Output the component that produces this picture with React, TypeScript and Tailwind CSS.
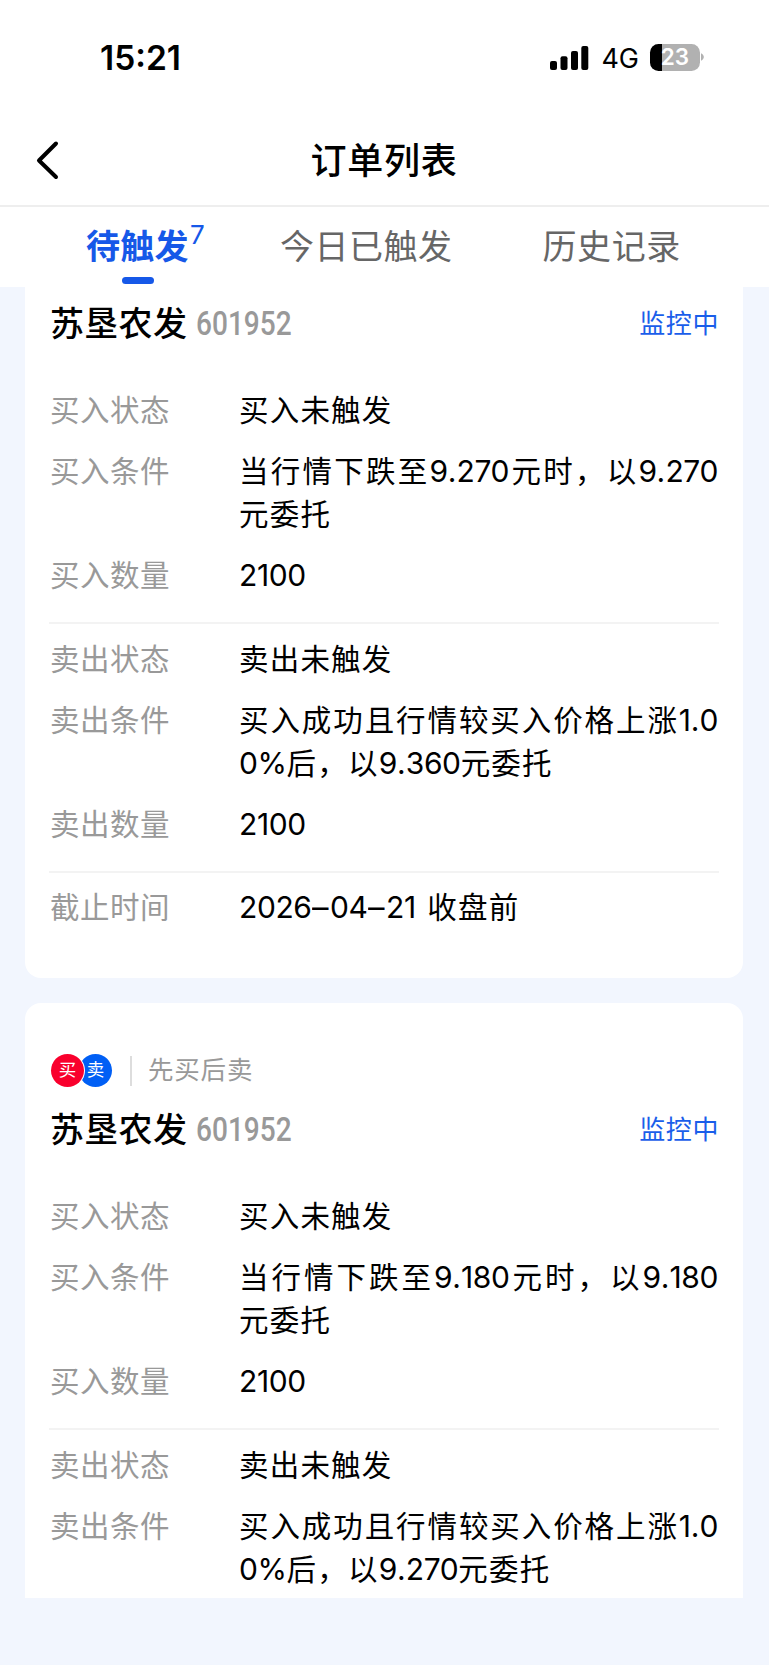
import React from "react";

type Row = { label: string; lines: string[] };

function Field({ label, lines }: Row) {
  return (
    <div className="flex">
      <div className="-mt-[2px] w-[190px] shrink-0 pl-px text-[29.5px] tracking-[0.5px] leading-[43px] text-[#999999]">{label}</div>
      <div className="mr-px flex-1 font-[Inter,'Noto_Sans_CJK_SC',sans-serif] text-[29.5px] leading-[43px] text-black">
        {lines.map((line, i) => (
          <p
            key={line}
            className={
              i < lines.length - 1
                ? "h-[43px] whitespace-nowrap [text-align-last:justify]"
                : "h-[43px] whitespace-nowrap tracking-[1.2px] [word-spacing:2px]"
            }
          >
            {line.split(/([\d%]+|[.–])/).map((part, k) => {
              if (/^[\d%]+$/.test(part)) {
                return (
                  <span key={k} className="text-[30px] tracking-[-0.4px]">
                    {part}
                  </span>
                );
              }
              if (part === ".") {
                return (
                  <span key={k} className="text-[30px] tracking-[0.2px]">
                    {part}
                  </span>
                );
              }
              if (part === "–") {
                return (
                  <span key={k} className="inline-block w-[18.5px] origin-left scale-x-110 text-[30px] tracking-normal">
                    {part}
                  </span>
                );
              }
              return part;
            })}
          </p>
        ))}
      </div>
    </div>
  );
}

function Fields({ rows }: { rows: Row[] }) {
  return (
    <div className="flex flex-col gap-[18px]">
      {rows.map((row) => (
        <Field key={row.label} {...row} />
      ))}
    </div>
  );
}

function StockTitle() {
  return (
    <div className="flex h-[48px] items-center">
      <h2 className="-mt-[4px] ml-px text-[34px] font-medium tracking-[0.3px] text-black">苏垦农发</h2>
      <span className="mt-[2px] ml-[9px] origin-left scale-x-[0.85] font-[Roboto,sans-serif] text-[33px] font-medium text-[#999999]">
        601952
      </span>
      <span className="-mt-[3px] ml-auto text-[26px] tracking-[0.6px] text-[#1a5eea]">监控中</span>
    </div>
  );
}

function Divider() {
  return <div className="mt-[25px] mb-[13.5px] h-[2px] bg-[#f3f3f3]" />;
}

function buyRows(price: string): Row[] {
  return [
    { label: "买入状态", lines: ["买入未触发"] },
    { label: "买入条件", lines: [`当行情下跌至${price}元时，以${price}`, "元委托"] },
    { label: "买入数量", lines: ["2100"] },
  ];
}

function sellRows(price: string): Row[] {
  return [
    { label: "卖出状态", lines: ["卖出未触发"] },
    { label: "卖出条件", lines: ["买入成功且行情较买入价格上涨1.0", `0%后，以${price}元委托`] },
  ];
}

function StatusBar() {
  return (
    <div className="flex h-[115px] items-start pt-[37px] pr-[65px] pl-[67px] font-[Inter,sans-serif]">
      <span className="ml-[33px] text-[33.5px] leading-[42px] font-semibold">15:21</span>
      <div className="ml-auto flex h-[42px] items-center">
        <svg width="39" height="26" viewBox="0 0 39 26">
          <rect x="0" y="16" width="7" height="9" rx="2" />
          <rect x="10.5" y="11.3" width="7" height="13.7" rx="2" />
          <rect x="21" y="6" width="7" height="19" rx="2" />
          <rect x="31.3" y="1" width="7" height="24" rx="2" />
        </svg>
        <span className="mt-[2px] ml-[12px] text-[27px]">4G</span>
        <div className="-mt-[2px] ml-[11px] flex h-[27px] w-[50px] items-center justify-center overflow-hidden rounded-[8.5px] bg-[linear-gradient(90deg,#000_0_12px,#b1b1b1_12px)] text-[22.5px] font-semibold text-white">
          23
        </div>
        <svg className="-mt-[2px] ml-px" width="3" height="10" viewBox="0 0 4 10">
          <path d="M0 0C5 2.500 5 7.500 0 10Z" fill="#b1b1b1" />
        </svg>
      </div>
    </div>
  );
}

export default function App() {
  return (
    <div className="flex h-[1665px] w-[769px] flex-col overflow-hidden bg-white font-['Noto_Sans_CJK_SC',sans-serif] text-black" lang="zh-CN">
      <StatusBar />
      <header className="grid h-[92px] grid-cols-[1fr_auto_1fr] items-center border-b-2 border-[#eeeeee]">
        <svg className="ml-[35px]" width="26" height="40" viewBox="0 0 26 40" fill="none" stroke="#000" strokeWidth="4" strokeLinecap="round" strokeLinejoin="round">
          <path d="M21 3.500 4 20.500 21 37" />
        </svg>
        <h1 className="-mt-[5px] -ml-px text-[36px] font-medium tracking-[0.7px]">订单列表</h1>
      </header>
      <nav className="flex h-[80px] shrink-0 text-[34px] leading-[76px] text-[#666666]">
        <div className="relative ml-[86px] w-[102px] font-bold tracking-[0.3px] text-[#1658e8]">
          <span className="whitespace-nowrap">待触发</span>
          <sup className="absolute top-[4px] left-[104px] font-[Inter,sans-serif] text-[26px] leading-[48px] font-normal tracking-normal">7</sup>
          <i className="absolute top-[69.5px] left-[36px] h-[7px] w-[32px] rounded-full bg-[#1658e8]" />
        </div>
        <span className="ml-[92px] tracking-[0.5px]">今日已触发</span>
        <span className="ml-[90px] tracking-[0.6px]">历史记录</span>
      </nav>
      <main className="flex flex-1 flex-col gap-[25px] bg-[#f2f6fe] pr-[26px] pl-[25px]">
        <section className="h-[691px] rounded-b-2xl bg-white px-[24px] pt-[12px]">
          <StockTitle />
          <div className="h-[42px]" />
          <Fields rows={buyRows("9.270")} />
          <Divider />
          <Fields rows={[...sellRows("9.360"), { label: "卖出数量", lines: ["2100"] }]} />
          <Divider />
          <Fields rows={[{ label: "截止时间", lines: ["2026–04–21 收盘前"] }]} />
        </section>
        <section className="h-[595px] rounded-t-2xl bg-white px-[24px] pt-[51px]">
          <div className="flex h-[33px] items-center pl-[2px]">
            <span className="relative flex size-[33px] items-center justify-center rounded-full bg-[#f9002d] pb-[2px] text-[17.5px] text-white ring-1 ring-white">买</span>
            <span className="-order-1 -mr-[61px] ml-[28px] flex size-[33px] items-center justify-center rounded-full bg-[#005ff5] pb-[2px] text-[17.5px] text-white">卖</span>
            <i className="ml-[46px] h-[30px] w-[2px] bg-[#dddddd]" />
            <span className="-mt-[4px] ml-[16px] text-[25.5px] tracking-[0.8px] text-[#999999]">先买后卖</span>
          </div>
          <div className="mt-[18px]">
            <StockTitle />
          </div>
          <div className="h-[42px]" />
          <Fields rows={buyRows("9.180")} />
          <Divider />
          <Fields rows={sellRows("9.270")} />
        </section>
      </main>
    </div>
  );
}
